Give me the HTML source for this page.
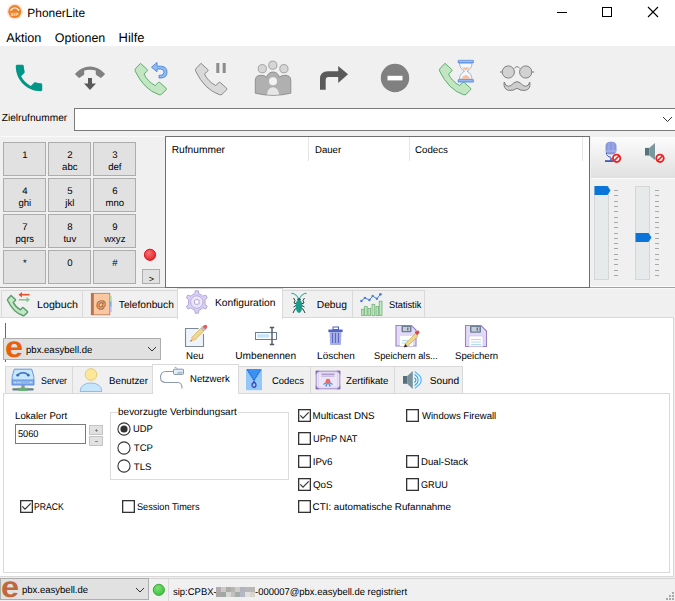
<!DOCTYPE html>
<html><head><meta charset="utf-8"><title>PhonerLite</title>
<style>
html,body{margin:0;padding:0;}
body{width:675px;height:601px;position:relative;overflow:hidden;background:#f0f0f0;font-family:'Liberation Sans', sans-serif;color:#000;}
svg{overflow:visible}
body{text-rendering:geometricPrecision}
</style></head><body>
<div style="position:absolute;left:0px;top:0px;width:675px;height:46px;background:#fff"></div>
<svg style="position:absolute;left:5px;top:2px" width="20" height="20" viewBox="0 0 20 20"><circle cx="9.8" cy="9.6" r="8.1" fill="#f6c49c" opacity="0.4"/><circle cx="9.8" cy="9.6" r="6.5" fill="#ee8228"/><path d="M5.4,8.6 Q9.8,3.6 14.2,8.6" fill="none" stroke="#fff" stroke-width="1.5" opacity="0.9"/><rect x="8" y="6.6" width="3.6" height="2.6" fill="#ee8228"/><text x="9.8" y="14.2" font-family="Liberation Sans" font-weight="bold" font-size="4.6" fill="#fde6d2" text-anchor="middle" letter-spacing="0.3">SIP</text></svg>
<div style="position:absolute;left:27.34px;top:8px;font-size:11.95px;line-height:11.95px;color:#000;white-space:nowrap;">PhonerLite</div>
<div style="position:absolute;left:557px;top:12px;width:10px;height:1px;background:#000"></div>
<div style="position:absolute;left:602px;top:7px;width:10px;height:10px;border:1px solid #000;box-sizing:border-box"></div>
<svg style="position:absolute;left:648px;top:7px" width="10" height="10" viewBox="0 0 10 10"><path d="M0,0 L10,10 M10,0 L0,10" stroke="#000" stroke-width="1.1"/></svg>
<div style="position:absolute;left:6.20px;top:32px;font-size:12.67px;line-height:12.67px;color:#000;white-space:nowrap;">Aktion</div>
<div style="position:absolute;left:54.80px;top:32px;font-size:12.44px;line-height:12.44px;color:#000;white-space:nowrap;">Optionen</div>
<div style="position:absolute;left:118.56px;top:32px;font-size:12.95px;line-height:12.95px;color:#000;white-space:nowrap;">Hilfe</div>
<div style="position:absolute;left:0px;top:46px;width:675px;height:90px;background:#f0f0f0"></div>
<svg style="position:absolute;left:14px;top:63px" width="30" height="30" viewBox="1.8 1.8 20.4 20.4"><path fill="#009688" d="M6.62 10.79c1.44 2.83 3.76 5.14 6.59 6.59l2.2-2.2c.27-.27.67-.36 1.02-.24 1.12.37 2.33.57 3.57.57.55 0 1 .45 1 1V20c0 .55-.45 1-1 1-9.39 0-17-7.61-17-17 0-.55.45-1 1-1h3.5c.55 0 1 .45 1 1 0 1.25.2 2.45.57 3.57.11.35.03.74-.25 1.02l-2.2 2.2z"/></svg>
<svg style="position:absolute;left:74px;top:64px" width="32" height="28" viewBox="0 0 32 28"><path fill="#808080" d="M1.2,10.5 Q1,9.8 1.6,9.2 Q8,2.6 16,2.6 Q24,2.6 30.4,9.2 Q31,9.8 30.8,10.5 L27.5,13.6 Q26.8,14.2 26,13.6 L22.3,11 Q21.8,10.6 21.8,9.9 L21.8,6.6 Q16,5 10.2,6.6 L10.2,9.9 Q10.2,10.6 9.7,11 L6,13.6 Q5.2,14.2 4.5,13.6 Z"/><path fill="#5a5a5a" d="M14,14 L18,14 L18,19.6 L22,19.6 L16,26 L10,19.6 L14,19.6 Z"/></svg>
<svg style="position:absolute;left:134px;top:61px" width="36" height="36" viewBox="0 0 36 36"><g transform="translate(0.5,2)"><path d="M6,0.3 L12.8,6.6 Q13.5,7.4 12.8,8.1 L9.5,11 Q13,18.5 20.8,22.6 L23.7,19.5 Q24.5,18.8 25.3,19.5 L31.6,25.2 Q32.3,26 31.6,26.8 L27,31.3 Q26,32.2 24.2,31.6 Q9.5,26.5 0.7,8.2 Q0.1,6.4 1.3,5.2 Z" fill="#c2e5c2" stroke="#5fae6e" stroke-width="1"/></g><path d="M23,1.5 L17.5,6.2 L23,10.8 L23,8 L26.5,8 Q30,8 30,11.2 Q30,14.3 26.5,14.3 L25,14.3 L25,17 L26.5,17 Q33,17 33,11.2 Q33,5.2 26.5,5.2 L23,5.2 Z" fill="#8cbcf2" stroke="#4a82d6" stroke-width="0.9"/></svg>
<svg style="position:absolute;left:194px;top:61px" width="36" height="36" viewBox="0 0 36 36"><g transform="translate(1,2)"><path d="M6,0.3 L12.8,6.6 Q13.5,7.4 12.8,8.1 L9.5,11 Q13,18.5 20.8,22.6 L23.7,19.5 Q24.5,18.8 25.3,19.5 L31.6,25.2 Q32.3,26 31.6,26.8 L27,31.3 Q26,32.2 24.2,31.6 Q9.5,26.5 0.7,8.2 Q0.1,6.4 1.3,5.2 Z" fill="#d9d9d9" stroke="#8a8a8a" stroke-width="1"/></g><rect x="22.3" y="2" width="3" height="10" fill="#8c8c8c"/><rect x="28.7" y="2" width="3" height="10" fill="#8c8c8c"/></svg>
<svg style="position:absolute;left:254px;top:59px" width="38" height="38" viewBox="0 0 38 38"><circle cx="8.3" cy="9.7" r="4.1" fill="#d6d6d6" stroke="#9a9a9a" stroke-width="0.9"/>
<circle cx="18.8" cy="6.2" r="4.1" fill="#d6d6d6" stroke="#9a9a9a" stroke-width="0.9"/>
<circle cx="29.9" cy="9.7" r="4.1" fill="#d6d6d6" stroke="#9a9a9a" stroke-width="0.9"/>
<path d="M1.3,34.2 L1.3,21.5 Q1.3,16.3 7,16.3 Q10.5,16.3 12.6,18 Q14.5,13 19,13 Q23.5,13 25.4,18 Q27.5,16.3 31,16.3 Q36.8,16.3 36.8,21.5 L36.8,34.2 Q19,38.5 1.3,34.2 Z" fill="#b0b0b0" stroke="#8a8a8a" stroke-width="0.9"/>
<circle cx="19" cy="22.3" r="4" fill="#f2f2f2"/>
<path d="M12.8,35.6 Q14,28.3 19,28.3 Q24,28.3 25.3,35.6 Q19,36.3 12.8,35.6 Z" fill="#e6e6e6"/></svg>
<svg style="position:absolute;left:318px;top:64px" width="32" height="28" viewBox="0 0 32 28"><path fill="#5a5a5a" d="M2,25.7 L2,15 Q2,7.3 10,7.3 L20.2,7.3 L20.2,2 L30,10.3 L20.2,19 L20.2,13 L10.5,13 Q7.7,13 7.7,16 L7.7,25.7 Z"/></svg>
<svg style="position:absolute;left:380px;top:63px" width="30" height="30" viewBox="0 0 30 30"><circle cx="15" cy="15" r="14.2" fill="#808080"/><rect x="7.5" y="12.8" width="15" height="4.6" fill="#fff"/></svg>
<svg style="position:absolute;left:438px;top:59px" width="38" height="38" viewBox="0 0 38 38"><g transform="translate(1,4)"><path d="M6,0.3 L12.8,6.6 Q13.5,7.4 12.8,8.1 L9.5,11 Q13,18.5 20.8,22.6 L23.7,19.5 Q24.5,18.8 25.3,19.5 L31.6,25.2 Q32.3,26 31.6,26.8 L27,31.3 Q26,32.2 24.2,31.6 Q9.5,26.5 0.7,8.2 Q0.1,6.4 1.3,5.2 Z" fill="#c2e5c2" stroke="#5fae6e" stroke-width="1"/></g><path d="M21.5,4 L34,4 Q34,9.5 29,12.2 Q34,15 34,20.4 L21.5,20.4 Q21.5,15 26.5,12.2 Q21.5,9.5 21.5,4 Z" fill="#f4f8fc" stroke="#8a9ab4" stroke-width="0.7"/><path d="M24,8.6 L31.5,8.6 Q30.2,10.6 27.75,11.3 Q25.3,10.6 24,8.6 Z" fill="#f8bc98"/><path d="M23.2,19.8 Q24.6,16.5 27.75,16 Q30.9,16.5 32.3,19.8 Z" fill="#f8bc98"/><rect x="20" y="1.2" width="15.6" height="2.8" rx="0.5" fill="#6e9ce8" stroke="#5a88d8" stroke-width="0.5"/><rect x="21" y="2.2" width="13.6" height="0.8" fill="#a8c8f4"/><rect x="20" y="20.4" width="15.6" height="2.8" rx="0.5" fill="#6e9ce8" stroke="#5a88d8" stroke-width="0.5"/><rect x="21" y="21.4" width="13.6" height="0.8" fill="#a8c8f4"/></svg>
<svg style="position:absolute;left:498px;top:62px" width="38" height="32" viewBox="0 0 38 32"><circle cx="10.3" cy="10" r="6.1" fill="#d2d2d2" stroke="#808080" stroke-width="1"/>
<circle cx="27.7" cy="10" r="6.1" fill="#d2d2d2" stroke="#808080" stroke-width="1"/>
<path d="M16.3,6.5 Q19,2.6 21.7,6.5" fill="none" stroke="#808080" stroke-width="1"/>
<path d="M1.8,10 L4.2,10 M33.8,10 L36.2,10" stroke="#808080" stroke-width="1"/>
<path d="M6.2,20 Q5,27 10.5,28.4 Q15.5,29 19,26.3 Q22.5,29 27.5,28.4 Q33,27 31.8,20 Q30.5,24.5 27.5,24.3 Q24.5,24 22.5,21 Q19,18.2 15.5,21 Q13.5,24 10.5,24.3 Q7.5,24.5 6.2,20 Z" fill="#cdcdcd" stroke="#808080" stroke-width="1"/></svg>
<div style="position:absolute;left:1.69px;top:114px;font-size:10.18px;line-height:10.18px;color:#000;white-space:nowrap;">Zielrufnummer</div>
<div style="position:absolute;left:74px;top:108px;width:610px;height:23px;background:#fff;border:1px solid #7a7a7a;box-sizing:border-box"></div>
<svg style="position:absolute;left:662px;top:116px" width="11" height="7" viewBox="0 0 11 7"><path d="M1,1 L5.5,5.5 L10,1" fill="none" stroke="#333" stroke-width="1"/></svg>
<div style="position:absolute;left:0px;top:136px;width:675px;height:1px;background:#fafafa"></div>
<div style="position:absolute;left:3px;top:142px;width:43px;height:34px;background:#e1e1e1;border:1px solid #adadad;box-sizing:border-box"></div>
<div style="position:absolute;left:-5.199999999999999px;top:151px;width:60px;text-align:center;font-size:9.6px;line-height:9.6px;color:#000;white-space:nowrap;">1</div>
<div style="position:absolute;left:48px;top:142px;width:43px;height:34px;background:#e1e1e1;border:1px solid #adadad;box-sizing:border-box"></div>
<div style="position:absolute;left:39.8px;top:151px;width:60px;text-align:center;font-size:9.6px;line-height:9.6px;color:#000;white-space:nowrap;">2</div>
<div style="position:absolute;left:39.8px;top:163px;width:60px;text-align:center;font-size:9.6px;line-height:9.6px;color:#000;white-space:nowrap;">abc</div>
<div style="position:absolute;left:93px;top:142px;width:43px;height:34px;background:#e1e1e1;border:1px solid #adadad;box-sizing:border-box"></div>
<div style="position:absolute;left:84.8px;top:151px;width:60px;text-align:center;font-size:9.6px;line-height:9.6px;color:#000;white-space:nowrap;">3</div>
<div style="position:absolute;left:84.8px;top:163px;width:60px;text-align:center;font-size:9.6px;line-height:9.6px;color:#000;white-space:nowrap;">def</div>
<div style="position:absolute;left:3px;top:178px;width:43px;height:34px;background:#e1e1e1;border:1px solid #adadad;box-sizing:border-box"></div>
<div style="position:absolute;left:-5.199999999999999px;top:187px;width:60px;text-align:center;font-size:9.6px;line-height:9.6px;color:#000;white-space:nowrap;">4</div>
<div style="position:absolute;left:-5.199999999999999px;top:199px;width:60px;text-align:center;font-size:9.6px;line-height:9.6px;color:#000;white-space:nowrap;">ghi</div>
<div style="position:absolute;left:48px;top:178px;width:43px;height:34px;background:#e1e1e1;border:1px solid #adadad;box-sizing:border-box"></div>
<div style="position:absolute;left:39.8px;top:187px;width:60px;text-align:center;font-size:9.6px;line-height:9.6px;color:#000;white-space:nowrap;">5</div>
<div style="position:absolute;left:39.8px;top:199px;width:60px;text-align:center;font-size:9.6px;line-height:9.6px;color:#000;white-space:nowrap;">jkl</div>
<div style="position:absolute;left:93px;top:178px;width:43px;height:34px;background:#e1e1e1;border:1px solid #adadad;box-sizing:border-box"></div>
<div style="position:absolute;left:84.8px;top:187px;width:60px;text-align:center;font-size:9.6px;line-height:9.6px;color:#000;white-space:nowrap;">6</div>
<div style="position:absolute;left:84.8px;top:199px;width:60px;text-align:center;font-size:9.6px;line-height:9.6px;color:#000;white-space:nowrap;">mno</div>
<div style="position:absolute;left:3px;top:214px;width:43px;height:34px;background:#e1e1e1;border:1px solid #adadad;box-sizing:border-box"></div>
<div style="position:absolute;left:-5.199999999999999px;top:223px;width:60px;text-align:center;font-size:9.6px;line-height:9.6px;color:#000;white-space:nowrap;">7</div>
<div style="position:absolute;left:-5.199999999999999px;top:235px;width:60px;text-align:center;font-size:9.6px;line-height:9.6px;color:#000;white-space:nowrap;">pqrs</div>
<div style="position:absolute;left:48px;top:214px;width:43px;height:34px;background:#e1e1e1;border:1px solid #adadad;box-sizing:border-box"></div>
<div style="position:absolute;left:39.8px;top:223px;width:60px;text-align:center;font-size:9.6px;line-height:9.6px;color:#000;white-space:nowrap;">8</div>
<div style="position:absolute;left:39.8px;top:235px;width:60px;text-align:center;font-size:9.6px;line-height:9.6px;color:#000;white-space:nowrap;">tuv</div>
<div style="position:absolute;left:93px;top:214px;width:43px;height:34px;background:#e1e1e1;border:1px solid #adadad;box-sizing:border-box"></div>
<div style="position:absolute;left:84.8px;top:223px;width:60px;text-align:center;font-size:9.6px;line-height:9.6px;color:#000;white-space:nowrap;">9</div>
<div style="position:absolute;left:84.8px;top:235px;width:60px;text-align:center;font-size:9.6px;line-height:9.6px;color:#000;white-space:nowrap;">wxyz</div>
<div style="position:absolute;left:3px;top:250px;width:43px;height:34px;background:#e1e1e1;border:1px solid #adadad;box-sizing:border-box"></div>
<div style="position:absolute;left:-5.199999999999999px;top:259px;width:60px;text-align:center;font-size:9.6px;line-height:9.6px;color:#000;white-space:nowrap;">*</div>
<div style="position:absolute;left:48px;top:250px;width:43px;height:34px;background:#e1e1e1;border:1px solid #adadad;box-sizing:border-box"></div>
<div style="position:absolute;left:39.8px;top:259px;width:60px;text-align:center;font-size:9.6px;line-height:9.6px;color:#000;white-space:nowrap;">0</div>
<div style="position:absolute;left:93px;top:250px;width:43px;height:34px;background:#e1e1e1;border:1px solid #adadad;box-sizing:border-box"></div>
<div style="position:absolute;left:84.8px;top:259px;width:60px;text-align:center;font-size:9.6px;line-height:9.6px;color:#000;white-space:nowrap;">#</div>
<svg style="position:absolute;left:143px;top:248px" width="14" height="14" viewBox="0 0 14 14"><defs><radialGradient id="rg" cx="0.4" cy="0.35" r="0.7"><stop offset="0" stop-color="#f87070"/><stop offset="1" stop-color="#e42424"/></radialGradient></defs><circle cx="7" cy="6.8" r="5.6" fill="url(#rg)" stroke="#dc0014" stroke-width="0.9"/></svg>
<div style="position:absolute;left:142px;top:269px;width:18px;height:15px;background:#e1e1e1;border:1px solid #adadad;box-sizing:border-box"></div>
<div style="position:absolute;left:121.30000000000001px;top:275px;width:60px;text-align:center;font-size:9px;line-height:9px;color:#000;white-space:nowrap;">&gt;</div>
<div style="position:absolute;left:165px;top:136px;width:425px;height:152px;background:#fff;border:1px solid #6f6f6f;box-sizing:border-box"></div>
<div style="position:absolute;left:308px;top:137px;width:1px;height:24px;background:#e5e5e5"></div>
<div style="position:absolute;left:409px;top:137px;width:1px;height:24px;background:#e5e5e5"></div>
<div style="position:absolute;left:582px;top:137px;width:1px;height:24px;background:#e5e5e5"></div>
<div style="position:absolute;left:171.68px;top:146px;font-size:10.21px;line-height:10.21px;color:#000;white-space:nowrap;">Rufnummer</div>
<div style="position:absolute;left:314.83px;top:146px;font-size:9.80px;line-height:9.80px;color:#000;white-space:nowrap;transform:scaleX(0.9775);transform-origin:0 0;">Dauer</div>
<div style="position:absolute;left:415.41px;top:146px;font-size:9.80px;line-height:9.80px;color:#000;white-space:nowrap;transform:scaleX(0.9925);transform-origin:0 0;">Codecs</div>
<div style="position:absolute;left:590px;top:136px;width:85px;height:151px;background:#f0f0f0"></div>
<div style="position:absolute;left:591px;top:137px;width:84px;height:41px;background:linear-gradient(#fcfcfc,#e0e0e0)"></div>
<div style="position:absolute;left:591px;top:178px;width:84px;height:1px;background:#fafafa"></div>
<svg style="position:absolute;left:602px;top:140px" width="22" height="26" viewBox="0 0 22 26"><rect x="3.5" y="1.8" width="11" height="12.8" rx="4.2" fill="#8a98dc"/><rect x="3.5" y="10.5" width="11" height="1" fill="#b4bef0"/>
<path d="M7,2.5 L7,10.5 M11,2.5 L11,10.5" stroke="#a8b4ec" stroke-width="0.9"/>
<path d="M4.2,12.5 Q4.5,16.8 9,17.2" fill="none" stroke="#3a58b8" stroke-width="1"/>
<path d="M9,17.8 L9,20.5" stroke="#3a58b8" stroke-width="1.4"/>
<rect x="3" y="20.3" width="8" height="1.6" fill="#2a48b0"/>
<circle cx="14.6" cy="18.3" r="4.6" fill="#e82424"/><circle cx="14.6" cy="18.3" r="2.7" fill="#fff"/><path d="M12.3,20.6 L16.9,16" stroke="#e82424" stroke-width="1.6"/></svg>
<svg style="position:absolute;left:642px;top:140px" width="24" height="26" viewBox="0 0 24 26"><rect x="3" y="7.9" width="4.2" height="7.6" fill="#56747c"/>
<path d="M7.2,7.9 L13,3 L13,20 L7.2,15.5 Z" fill="#7a969e"/>
<circle cx="18" cy="18.3" r="4.6" fill="#e82424"/><circle cx="18" cy="18.3" r="2.7" fill="#fff"/><path d="M15.7,20.6 L20.3,16" stroke="#e82424" stroke-width="1.6"/></svg>
<div style="position:absolute;left:594px;top:186px;width:15px;height:94px;background:#e7eaea;border:1px solid #d6d6d6;box-sizing:border-box"></div>
<div style="position:absolute;left:635px;top:186px;width:15px;height:94px;background:#e7eaea;border:1px solid #d6d6d6;box-sizing:border-box"></div>
<svg style="position:absolute;left:594px;top:186px" width="17" height="9" viewBox="0 0 17 9"><path d="M0.5,0 L13.5,0 L16.5,4.5 L13.5,9 L0.5,9 Z" fill="#0a74d8"/></svg>
<svg style="position:absolute;left:635px;top:233px" width="17" height="9" viewBox="0 0 17 9"><path d="M0.5,0 L13.5,0 L16.5,4.5 L13.5,9 L0.5,9 Z" fill="#0a74d8"/></svg>
<div style="position:absolute;left:614px;top:190px;width:4px;height:1px;background:#a8a8a8"></div>
<div style="position:absolute;left:655px;top:190px;width:4px;height:1px;background:#a8a8a8"></div>
<div style="position:absolute;left:614px;top:195px;width:4px;height:1px;background:#a8a8a8"></div>
<div style="position:absolute;left:655px;top:195px;width:4px;height:1px;background:#a8a8a8"></div>
<div style="position:absolute;left:614px;top:201px;width:4px;height:1px;background:#a8a8a8"></div>
<div style="position:absolute;left:655px;top:201px;width:4px;height:1px;background:#a8a8a8"></div>
<div style="position:absolute;left:614px;top:206px;width:4px;height:1px;background:#a8a8a8"></div>
<div style="position:absolute;left:655px;top:206px;width:4px;height:1px;background:#a8a8a8"></div>
<div style="position:absolute;left:614px;top:211px;width:4px;height:1px;background:#a8a8a8"></div>
<div style="position:absolute;left:655px;top:211px;width:4px;height:1px;background:#a8a8a8"></div>
<div style="position:absolute;left:614px;top:217px;width:4px;height:1px;background:#a8a8a8"></div>
<div style="position:absolute;left:655px;top:217px;width:4px;height:1px;background:#a8a8a8"></div>
<div style="position:absolute;left:614px;top:222px;width:4px;height:1px;background:#a8a8a8"></div>
<div style="position:absolute;left:655px;top:222px;width:4px;height:1px;background:#a8a8a8"></div>
<div style="position:absolute;left:614px;top:227px;width:4px;height:1px;background:#a8a8a8"></div>
<div style="position:absolute;left:655px;top:227px;width:4px;height:1px;background:#a8a8a8"></div>
<div style="position:absolute;left:614px;top:233px;width:4px;height:1px;background:#a8a8a8"></div>
<div style="position:absolute;left:655px;top:233px;width:4px;height:1px;background:#a8a8a8"></div>
<div style="position:absolute;left:614px;top:238px;width:4px;height:1px;background:#a8a8a8"></div>
<div style="position:absolute;left:655px;top:238px;width:4px;height:1px;background:#a8a8a8"></div>
<div style="position:absolute;left:614px;top:243px;width:4px;height:1px;background:#a8a8a8"></div>
<div style="position:absolute;left:655px;top:243px;width:4px;height:1px;background:#a8a8a8"></div>
<div style="position:absolute;left:614px;top:248px;width:4px;height:1px;background:#a8a8a8"></div>
<div style="position:absolute;left:655px;top:248px;width:4px;height:1px;background:#a8a8a8"></div>
<div style="position:absolute;left:614px;top:254px;width:4px;height:1px;background:#a8a8a8"></div>
<div style="position:absolute;left:655px;top:254px;width:4px;height:1px;background:#a8a8a8"></div>
<div style="position:absolute;left:614px;top:259px;width:4px;height:1px;background:#a8a8a8"></div>
<div style="position:absolute;left:655px;top:259px;width:4px;height:1px;background:#a8a8a8"></div>
<div style="position:absolute;left:614px;top:264px;width:4px;height:1px;background:#a8a8a8"></div>
<div style="position:absolute;left:655px;top:264px;width:4px;height:1px;background:#a8a8a8"></div>
<div style="position:absolute;left:614px;top:270px;width:4px;height:1px;background:#a8a8a8"></div>
<div style="position:absolute;left:655px;top:270px;width:4px;height:1px;background:#a8a8a8"></div>
<div style="position:absolute;left:614px;top:275px;width:4px;height:1px;background:#a8a8a8"></div>
<div style="position:absolute;left:655px;top:275px;width:4px;height:1px;background:#a8a8a8"></div>
<div style="position:absolute;left:590px;top:286px;width:85px;height:1px;background:#fcfcfc"></div>
<div style="position:absolute;left:0px;top:287px;width:675px;height:1px;background:#a0a0a0"></div>
<div style="position:absolute;left:165px;top:287px;width:425px;height:1px;background:#6f6f6f"></div>
<div style="position:absolute;left:0px;top:288px;width:675px;height:30px;background:#f0f0f0"></div>
<div style="position:absolute;left:0px;top:288px;width:675px;height:1px;background:#f7f7f7"></div>
<div style="position:absolute;left:0px;top:317px;width:674px;height:260px;background:#fff;border:1px solid #d9d9d9;border-left:none;box-sizing:border-box"></div>
<div style="position:absolute;left:1px;top:290px;width:82px;height:27px;background:#f0f0f0;border:1px solid #d9d9d9;border-bottom:none;box-sizing:border-box"></div>
<div style="position:absolute;left:82px;top:290px;width:96px;height:27px;background:#f0f0f0;border:1px solid #d9d9d9;border-bottom:none;box-sizing:border-box"></div>
<div style="position:absolute;left:282px;top:290px;width:71px;height:27px;background:#f0f0f0;border:1px solid #d9d9d9;border-bottom:none;box-sizing:border-box"></div>
<div style="position:absolute;left:352px;top:290px;width:73px;height:27px;background:#f0f0f0;border:1px solid #d9d9d9;border-bottom:none;box-sizing:border-box"></div>
<div style="position:absolute;left:177px;top:288px;width:106px;height:31px;background:#fff;border:1px solid #d9d9d9;border-bottom:none;box-sizing:border-box"></div>
<div style="position:absolute;left:36.54px;top:301px;font-size:10.30px;line-height:10.30px;color:#000;white-space:nowrap;transform:scaleX(1.0389);transform-origin:0 0;">Logbuch</div>
<div style="position:absolute;left:118.80px;top:301px;font-size:10.21px;line-height:10.21px;color:#000;white-space:nowrap;">Telefonbuch</div>
<div style="position:absolute;left:214.88px;top:299px;font-size:10.27px;line-height:10.27px;color:#000;white-space:nowrap;">Konfiguration</div>
<div style="position:absolute;left:316.78px;top:301px;font-size:10.25px;line-height:10.25px;color:#000;white-space:nowrap;">Debug</div>
<div style="position:absolute;left:388.73px;top:301px;font-size:9.80px;line-height:9.80px;color:#000;white-space:nowrap;transform:scaleX(0.9437);transform-origin:0 0;">Statistik</div>
<svg style="position:absolute;left:6px;top:292px" width="26" height="26" viewBox="0 0 26 26"><g transform="translate(1.2,3.3) scale(0.64)"><path d="M6,0.3 L12.8,6.6 Q13.5,7.4 12.8,8.1 L9.5,11 Q13,18.5 20.8,22.6 L23.7,19.5 Q24.5,18.8 25.3,19.5 L31.6,25.2 Q32.3,26 31.6,26.8 L27,31.3 Q26,32.2 24.2,31.6 Q9.5,26.5 0.7,8.2 Q0.1,6.4 1.3,5.2 Z" fill="#c2e8c2" stroke="#5a9c6c" stroke-width="2.2"/></g><path d="M14.5,2.7 L23.5,2.7" stroke="#e8502e" stroke-width="1.6"/><path d="M12.5,2.7 L16,0 L16,5.4 Z" fill="#e8502e"/><path d="M12.8,7.8 L22,7.8" stroke="#86c496" stroke-width="1.6"/><path d="M24,7.8 L20.5,5.1 L20.5,10.5 Z" fill="#86c496"/></svg>
<svg style="position:absolute;left:90px;top:292px" width="24" height="24" viewBox="0 0 24 24"><rect x="1.3" y="1.3" width="18.5" height="21.5" fill="#fac8a0" stroke="#b8734e" stroke-width="0.8"/>
<rect x="1" y="1" width="2.8" height="22" fill="#b8734e"/>
<rect x="19.9" y="3.8" width="1.8" height="5.4" fill="#a8dca8"/><rect x="19.9" y="9.2" width="1.8" height="5.6" fill="#80b0f0"/><rect x="19.9" y="14.8" width="1.8" height="5.4" fill="#c8b8f0"/>
<text x="11.2" y="16.2" font-family="Liberation Sans" font-size="10.5" fill="#a0603c" stroke="#a0603c" stroke-width="0.25" text-anchor="middle">@</text></svg>
<svg style="position:absolute;left:185px;top:289px" width="24" height="26" viewBox="0 0 24 26"><path d="M7.80,5.73 L9.97,4.85 L10.43,1.81 L13.57,1.81 L14.03,4.85 L16.20,5.73 L18.04,7.16 L20.90,6.04 L22.48,8.77 L20.07,10.68 L20.40,13.00 L20.07,15.32 L22.48,17.23 L20.90,19.96 L18.04,18.84 L16.20,20.27 L14.03,21.15 L13.57,24.19 L10.43,24.19 L9.97,21.15 L7.80,20.27 L5.96,18.84 L3.10,19.96 L1.52,17.23 L3.93,15.32 L3.60,13.00 L3.93,10.68 L1.52,8.77 L3.10,6.04 L5.96,7.16 Z" transform="translate(-0.2,0)" fill="#d9d1f1" stroke="#ae9fd8" stroke-width="0.9" stroke-linejoin="round"/>
<circle cx="11.8" cy="13" r="6.2" fill="#ebe7f8" stroke="#ae9fd8" stroke-width="0.8"/>
<rect x="9.6" y="10.8" width="4.4" height="4.4" rx="0.6" fill="#fff" stroke="#a898d4" stroke-width="0.9"/></svg>
<svg style="position:absolute;left:289px;top:292px" width="20" height="23" viewBox="0 0 20 23"><path d="M2.5,2 Q3,1 4.5,1.5 Q8,3 10,7 M17.5,2 Q17,1 15.5,1.5 Q12,3 10,7" fill="none" stroke="#4ab0a0" stroke-width="1.1"/>
<path d="M4.5,6 L6,8.5 L5,11 L8,12 M15.5,6 L14,8.5 L15,11 L12,12 M4.5,15 L7,13.5 M15.5,15 L13,13.5 M4,21 L6,17 L8,16.5 M16,21 L14,17 L12,16.5" fill="none" stroke="#2e3c3c" stroke-width="1"/>
<ellipse cx="10" cy="7.5" rx="1.8" ry="1.6" fill="#0e6e60"/>
<path d="M10,8 Q13.3,8.5 13.3,13 Q13.3,20 10,21 Q6.7,20 6.7,13 Q6.7,8.5 10,8 Z" fill="#1a9c8a"/></svg>
<svg style="position:absolute;left:359px;top:292px" width="25" height="25" viewBox="0 0 25 25"><path d="M2.4,9 L5.9,5.9 L10.4,8 L13.7,4 L17.9,6.7 L21.4,2.3" fill="none" stroke="#4a80d2" stroke-width="1"/>
<g fill="#4a80d2"><circle cx="2.4" cy="9" r="1.3"/><circle cx="5.9" cy="5.9" r="1.2"/><circle cx="10.4" cy="8" r="1.2"/><circle cx="13.7" cy="4" r="1.2"/><circle cx="17.9" cy="6.7" r="1.2"/><circle cx="21.4" cy="2.3" r="1.4"/></g>
<g fill="#bfe4bf" stroke="#74b27a" stroke-width="0.8"><rect x="2.4" y="17.2" width="2.6" height="6.2"/><rect x="5.6" y="14.5" width="2.6" height="8.9"/><rect x="9" y="16.5" width="2.6" height="6.9"/><rect x="13" y="12.3" width="2.8" height="11.1"/><rect x="17" y="14.5" width="2.6" height="8.9"/><rect x="20.2" y="9.2" width="2.8" height="14.2"/></g></svg>
<div style="position:absolute;left:5px;top:323px;width:1px;height:39px;background:#6a6a6a"></div>
<div style="position:absolute;left:3px;top:338px;width:158px;height:22px;background:#e1e1e1;border:1px solid #adadad;box-sizing:border-box"></div>
<svg style="position:absolute;left:3px;top:336px" width="24" height="24" viewBox="0 0 24 24"><text transform="translate(11,21) scale(1.1,1)" font-family="Liberation Sans" font-weight="bold" font-size="29.5" fill="#e8600a" text-anchor="middle">e</text></svg>
<div style="position:absolute;left:25.83px;top:346px;font-size:9.80px;line-height:9.80px;color:#000;white-space:nowrap;transform:scaleX(0.9753);transform-origin:0 0;">pbx.easybell.de</div>
<svg style="position:absolute;left:147px;top:346px" width="10" height="7" viewBox="0 0 10 7"><path d="M1,1 L5,5 L9,1" fill="none" stroke="#333" stroke-width="1"/></svg>
<div style="position:absolute;left:186.03px;top:352px;font-size:9.80px;line-height:9.80px;color:#000;white-space:nowrap;transform:scaleX(0.9852);transform-origin:0 0;">Neu</div>
<div style="position:absolute;left:235.29px;top:352px;font-size:10.14px;line-height:10.14px;color:#000;white-space:nowrap;">Umbenennen</div>
<div style="position:absolute;left:317.10px;top:352px;font-size:9.96px;line-height:9.96px;color:#000;white-space:nowrap;">Löschen</div>
<div style="position:absolute;left:373.83px;top:352px;font-size:9.80px;line-height:9.80px;color:#000;white-space:nowrap;transform:scaleX(0.9443);transform-origin:0 0;">Speichern als...</div>
<div style="position:absolute;left:454.62px;top:352px;font-size:9.80px;line-height:9.80px;color:#000;white-space:nowrap;transform:scaleX(0.9795);transform-origin:0 0;">Speichern</div>
<svg style="position:absolute;left:183px;top:323px" width="26" height="26" viewBox="0 0 26 26"><path d="M15.5,5.5 L2.5,5.5 L2.5,23.5 L20.5,23.5 L20.5,11" fill="#eef4fa" stroke="#7a8898" stroke-width="1.1"/>
<path d="M11.64,17.18 L8.82,14.36 L18.0,5.17 L20.83,7.99 Z" fill="#f2d88e" stroke="#c9a24a" stroke-width="0.6"/>
<path d="M7.4,18.6 L8.82,14.36 L11.64,17.18 Z" fill="#f6c47e"/>
<path d="M7.4,18.6 L7.9,17.1 L8.9,18.1 Z" fill="#222"/>
<path d="M18.0,5.17 L20.83,7.99 L22.4,6.4 L19.6,3.6 Z" fill="#b4c4d4" stroke="#8a9aaa" stroke-width="0.5"/>
<path d="M19.6,3.6 L22.4,6.4 L23.6,5.2 Q25,3.6 23.8,2.2 Q22.4,1 20.8,2.4 Z" fill="#ee5a5a"/></svg>
<svg style="position:absolute;left:254px;top:326px" width="24" height="20" viewBox="0 0 24 20"><rect x="1.5" y="6.5" width="21" height="7" fill="#fff" stroke="#6a7e92" stroke-width="1"/>
<rect x="3.2" y="8.2" width="11.8" height="3.4" fill="#c2e4fc"/>
<path d="M18,1.5 L18,18.5 M15.8,1.5 L20.2,1.5 M15.8,18.5 L20.2,18.5" stroke="#4e5866" stroke-width="1.4"/></svg>
<svg style="position:absolute;left:327px;top:325px" width="17" height="21" viewBox="0 0 17 21"><rect x="6" y="2" width="5.5" height="2.5" fill="none" stroke="#5060c0" stroke-width="1"/>
<path d="M1.5,4.5 L15.5,4.5 L15.8,7 L1.2,7 Z" fill="#5464c4"/>
<path d="M2.5,7 L14.5,7 L14,19 Q14,20 13,20 L4,20 Q3,20 3,19 Z" fill="#a8b0e2"/>
<path d="M5.5,8 L5.5,18 M8.5,8 L8.5,18 M11.5,8 L11.5,18" stroke="#5a68c6" stroke-width="1.1"/></svg>
<svg style="position:absolute;left:394px;top:324px" width="26" height="24" viewBox="0 0 26 24"><path d="M2,1.5 L17.5,1.5 L22,6 L22,22 L2,22 Z" fill="#e2daf6" stroke="#9a80c4" stroke-width="1.1"/>
<rect x="7.5" y="1.8" width="10" height="6.5" rx="1" fill="#6a7e94"/><rect x="9" y="3" width="7" height="4" fill="#c8ccd8"/><rect x="13" y="3.5" width="1.5" height="3" fill="#6a7e94"/>
<rect x="6" y="12" width="13" height="10" fill="#fff"/>
<path d="M8,16.5 L14,16.5 M8,19 L15,19" stroke="#a8d8f0" stroke-width="0.9"/>
<path d="M11,20 L21.5,9.5 L24,12 L13.5,22.5 Z" fill="#f0d68c" stroke="#c8a048" stroke-width="0.6"/>
<path d="M20.8,8.8 L23,6.6 Q24,6 25,7 Q26,8 25.2,9 L23.3,11.2 Z" fill="#e24848"/>
<path d="M11,20 L13.5,22.5 L10,23.5 Z" fill="#222"/></svg>
<svg style="position:absolute;left:463px;top:323px" width="26" height="26" viewBox="0 0 26 26"><path d="M2.5,2.5 L18,2.5 L23.5,8 L23.5,23.5 L2.5,23.5 Z" fill="#e2daf6" stroke="#9a80c4" stroke-width="1.1"/>
<rect x="7" y="2.8" width="11" height="7" rx="1" fill="#6a7e94"/><rect x="8.5" y="4" width="8" height="4.5" fill="#c8ccd8"/><rect x="13.5" y="4.5" width="1.6" height="3.2" fill="#6a7e94"/>
<rect x="6" y="13" width="14" height="10.5" fill="#fff" stroke="#c8bce8" stroke-width="0.6"/>
<path d="M8,16.5 L18,16.5 M8,19 L18,19 M8,21.5 L18,21.5" stroke="#a8d8f0" stroke-width="0.9"/></svg>
<div style="position:absolute;left:3px;top:393px;width:667px;height:180px;background:#fff;border:1px solid #d9d9d9;box-sizing:border-box"></div>
<div style="position:absolute;left:5px;top:366px;width:68px;height:27px;background:#f0f0f0;border:1px solid #d9d9d9;border-bottom:none;box-sizing:border-box"></div>
<div style="position:absolute;left:72px;top:366px;width:81px;height:27px;background:#f0f0f0;border:1px solid #d9d9d9;border-bottom:none;box-sizing:border-box"></div>
<div style="position:absolute;left:238px;top:366px;width:73px;height:27px;background:#f0f0f0;border:1px solid #d9d9d9;border-bottom:none;box-sizing:border-box"></div>
<div style="position:absolute;left:310px;top:366px;width:85px;height:27px;background:#f0f0f0;border:1px solid #d9d9d9;border-bottom:none;box-sizing:border-box"></div>
<div style="position:absolute;left:394px;top:366px;width:69px;height:27px;background:#f0f0f0;border:1px solid #d9d9d9;border-bottom:none;box-sizing:border-box"></div>
<div style="position:absolute;left:152px;top:364px;width:87px;height:30px;background:#fff;border:1px solid #d9d9d9;border-bottom:none;box-sizing:border-box"></div>
<div style="position:absolute;left:41.05px;top:377px;font-size:9.80px;line-height:9.80px;color:#000;white-space:nowrap;transform:scaleX(0.9032);transform-origin:0 0;">Server</div>
<div style="position:absolute;left:109.02px;top:377px;font-size:9.80px;line-height:9.80px;color:#000;white-space:nowrap;transform:scaleX(0.9918);transform-origin:0 0;">Benutzer</div>
<div style="position:absolute;left:189.84px;top:375px;font-size:9.80px;line-height:9.80px;color:#000;white-space:nowrap;transform:scaleX(0.9737);transform-origin:0 0;">Netzwerk</div>
<div style="position:absolute;left:271.93px;top:377px;font-size:9.80px;line-height:9.80px;color:#000;white-space:nowrap;transform:scaleX(0.9617);transform-origin:0 0;">Codecs</div>
<div style="position:absolute;left:346.11px;top:377px;font-size:9.80px;line-height:9.80px;color:#000;white-space:nowrap;transform:scaleX(0.9864);transform-origin:0 0;">Zertifikate</div>
<div style="position:absolute;left:429.69px;top:377px;font-size:10.20px;line-height:10.20px;color:#000;white-space:nowrap;">Sound</div>
<svg style="position:absolute;left:11px;top:368px" width="24" height="24" viewBox="0 0 24 24"><path d="M3.3,1.2 L20.7,1.2 L22.8,8.3 L22.8,16.8 L1.2,16.8 L1.2,8.3 Z" fill="#c6e6fc" stroke="#5c8ce0" stroke-width="0.9"/>
<rect x="1.2" y="12" width="21.6" height="4.8" fill="#8ab6ec" stroke="#5c8ce0" stroke-width="0.9"/>
<path d="M6.5,7 Q12,2.5 17.5,7" fill="none" stroke="#3a6ac0" stroke-width="1.4"/><circle cx="6.7" cy="7.2" r="1.4" fill="#3a6ac0"/><circle cx="17.3" cy="7.2" r="1.4" fill="#3a6ac0"/>
<path d="M3.5,14.4 L5,14.4 M6.5,14.4 L7.5,14.4 M8.5,14.4 L9.5,14.4 M19,14.4 L20.5,14.4" stroke="#e8f2fc" stroke-width="1"/>
<rect x="10.3" y="17" width="3.4" height="3" fill="#8898a8"/>
<rect x="1.3" y="20.3" width="21.4" height="2.2" rx="1" fill="#6a7a8c"/>
<rect x="7.2" y="19.8" width="9.6" height="3" fill="#64b070"/></svg>
<svg style="position:absolute;left:79px;top:367px" width="25" height="26" viewBox="0 0 25 26"><circle cx="12" cy="7.5" r="5.8" fill="#fde89a" stroke="#e0c060" stroke-width="0.8"/>
<path d="M1.2,24.5 Q1.2,20 4.5,18 Q7,16 12,16 Q17,16 19.5,18 Q22.8,20 22.8,24.5 Z" fill="#c6e6fc" stroke="#86acd8" stroke-width="0.8"/></svg>
<svg style="position:absolute;left:158px;top:366px" width="28" height="24" viewBox="0 0 28 24"><path d="M15,5.5 L8,5.5 Q2.5,5.5 2.5,11.5 Q2.5,16.5 8,16.5 L20,16.5 Q24,16.5 24,22.5" fill="none" stroke="#8c9cac" stroke-width="1.1"/>
<rect x="15.5" y="3.2" width="10" height="5.2" rx="0.8" fill="#e4eef8" stroke="#7a8ca0" stroke-width="0.9"/>
<rect x="19.5" y="5.8" width="5" height="1.8" fill="#a8bcd0"/>
<path d="M16.5,1 L19.5,2.5" stroke="#8c9cac" stroke-width="0.8"/></svg>
<svg style="position:absolute;left:245px;top:368px" width="18" height="23" viewBox="0 0 18 23"><rect x="1" y="1" width="16" height="21.2" fill="#92c8f8"/>
<path d="M1.5,1 L16.5,1 L9,13 Z" fill="#3c92f0"/>
<path d="M2.5,2 L9,12.5 L15.5,2" fill="none" stroke="#1e62d0" stroke-width="1.3" stroke-dasharray="1.2,0.9"/>
<path d="M9,13 L9,15" stroke="#3a40b0" stroke-width="1.5"/>
<ellipse cx="9" cy="17" rx="2" ry="2.4" fill="none" stroke="#3a40b0" stroke-width="1.2"/></svg>
<svg style="position:absolute;left:315px;top:370px" width="26" height="20" viewBox="0 0 26 20"><rect x="1.2" y="1.2" width="23.6" height="17.6" fill="#ece6f8" stroke="#a08ac8" stroke-width="1"/>
<rect x="3.2" y="3" width="19.6" height="14" fill="none" stroke="#d4c8ea" stroke-width="0.7"/>
<path d="M0.7,0.7 L4.5,0.7 L0.7,4.5 Z M25.3,0.7 L21.5,0.7 L25.3,4.5 Z M0.7,19.3 L4.5,19.3 L0.7,15.5 Z M25.3,19.3 L21.5,19.3 L25.3,15.5 Z" fill="#8a70b4"/>
<path d="M6.5,4.2 L19.5,4.2" stroke="#8a70b4" stroke-width="0.9"/><path d="M6.5,6.1 L19.5,6.1" stroke="#a48cc8" stroke-width="0.7"/>
<path d="M12.2,11.5 L10,16.5 L11,16 L11.5,17 L13.2,12.5 Z M13.8,11.5 L16,16.5 L15,16 L14.5,17 L12.8,12.5 Z" fill="#4a90d8"/>
<path d="M12,12 L8.5,14.5 M14,12 L17.5,14.5" stroke="#4a90d8" stroke-width="1.3"/>
<circle cx="13" cy="11.2" r="2.4" fill="#ee6a6a"/></svg>
<svg style="position:absolute;left:401px;top:369px" width="24" height="22" viewBox="0 0 24 22"><rect x="2" y="7" width="4.2" height="7.8" fill="#586e7c"/>
<path d="M6.2,7 L11.8,2 L11.8,20 L6.2,14.8 Z" fill="#7a929c"/>
<path d="M13.4,8.6 Q16.4,11 13.4,13.6" fill="none" stroke="#1a9cf0" stroke-width="1.1"/>
<path d="M13.6,5.4 L16.4,8 Q17.9,11 16.4,14 L13.6,16.6" fill="none" stroke="#2aa6f2" stroke-width="1.1"/>
<path d="M13.8,2.6 L18.8,6.8 Q21.6,11 18.8,15.2 L13.8,19.4" fill="none" stroke="#44b4f8" stroke-width="1.1"/></svg>
<div style="position:absolute;left:14.83px;top:412px;font-size:9.80px;line-height:9.80px;color:#000;white-space:nowrap;transform:scaleX(0.9870);transform-origin:0 0;">Lokaler Port</div>
<div style="position:absolute;left:15px;top:424px;width:71px;height:20px;background:#fff;border:1px solid #7a7a7a;box-sizing:border-box"></div>
<div style="position:absolute;left:17.73px;top:430px;font-size:9.80px;line-height:9.80px;color:#000;white-space:nowrap;transform:scaleX(0.9404);transform-origin:0 0;">5060</div>
<div style="position:absolute;left:89px;top:425px;width:14px;height:10px;background:#e1e1e1;border:1px solid #c4c4c4;box-sizing:border-box"></div>
<div style="position:absolute;left:89px;top:436px;width:14px;height:10px;background:#e1e1e1;border:1px solid #c4c4c4;box-sizing:border-box"></div>
<div style="position:absolute;left:95px;top:430px;width:3px;height:1px;background:#8a8a8a"></div>
<div style="position:absolute;left:96px;top:429px;width:1px;height:3px;background:#8a8a8a"></div>
<div style="position:absolute;left:95px;top:441px;width:3px;height:1px;background:#8a8a8a"></div>
<div style="position:absolute;left:110px;top:412px;width:179px;height:68px;border:1px solid #dcdcdc;box-sizing:border-box"></div>
<div style="position:absolute;left:117.5px;top:405px;width:120px;height:12px;background:#fff"></div>
<div style="position:absolute;left:118.10px;top:408px;font-size:9.94px;line-height:9.94px;color:#000;white-space:nowrap;">bevorzugte Verbindungsart</div>
<svg style="position:absolute;left:117.4px;top:421.5px" width="14" height="14" viewBox="0 0 14 14"><circle cx="7" cy="7" r="6.1" fill="#fff" stroke="#333" stroke-width="1.1"/><circle cx="7" cy="7" r="3.6" fill="#333"/></svg>
<svg style="position:absolute;left:117.4px;top:440.5px" width="14" height="14" viewBox="0 0 14 14"><circle cx="7" cy="7" r="6.1" fill="#fff" stroke="#333" stroke-width="1.1"/></svg>
<svg style="position:absolute;left:117.4px;top:459.3px" width="14" height="14" viewBox="0 0 14 14"><circle cx="7" cy="7" r="6.1" fill="#fff" stroke="#333" stroke-width="1.1"/></svg>
<div style="position:absolute;left:133.14px;top:425px;font-size:9.80px;line-height:9.80px;color:#000;white-space:nowrap;transform:scaleX(0.9568);transform-origin:0 0;">UDP</div>
<div style="position:absolute;left:133.8px;top:444px;font-size:9.6px;line-height:9.6px;color:#000;white-space:nowrap;">TCP</div>
<div style="position:absolute;left:133.8px;top:463px;font-size:9.6px;line-height:9.6px;color:#000;white-space:nowrap;">TLS</div>
<svg style="position:absolute;left:298px;top:409px" width="13" height="13" viewBox="0 0 13 13"><rect x="0.65" y="0.65" width="11.7" height="11.7" fill="#fff" stroke="#333" stroke-width="1.3"/><path d="M2.3,6.4 L5,9.2 L10.7,3.4" fill="none" stroke="#333" stroke-width="1.2"/></svg>
<div style="position:absolute;left:312.52px;top:412px;font-size:9.80px;line-height:9.80px;color:#000;white-space:nowrap;">Multicast DNS</div>
<svg style="position:absolute;left:406px;top:409px" width="13" height="13" viewBox="0 0 13 13"><rect x="0.65" y="0.65" width="11.7" height="11.7" fill="#fff" stroke="#333" stroke-width="1.3"/></svg>
<div style="position:absolute;left:421.50px;top:412px;font-size:9.80px;line-height:9.80px;color:#000;white-space:nowrap;transform:scaleX(0.9732);transform-origin:0 0;">Windows Firewall</div>
<svg style="position:absolute;left:298px;top:432px" width="13" height="13" viewBox="0 0 13 13"><rect x="0.65" y="0.65" width="11.7" height="11.7" fill="#fff" stroke="#333" stroke-width="1.3"/></svg>
<div style="position:absolute;left:313.05px;top:435px;font-size:9.80px;line-height:9.80px;color:#000;white-space:nowrap;transform:scaleX(0.9437);transform-origin:0 0;">UPnP NAT</div>
<svg style="position:absolute;left:298px;top:455px" width="13" height="13" viewBox="0 0 13 13"><rect x="0.65" y="0.65" width="11.7" height="11.7" fill="#fff" stroke="#333" stroke-width="1.3"/></svg>
<div style="position:absolute;left:312.82px;top:458px;font-size:9.80px;line-height:9.80px;color:#000;white-space:nowrap;">IPv6</div>
<svg style="position:absolute;left:406px;top:455px" width="13" height="13" viewBox="0 0 13 13"><rect x="0.65" y="0.65" width="11.7" height="11.7" fill="#fff" stroke="#333" stroke-width="1.3"/></svg>
<div style="position:absolute;left:420.73px;top:458px;font-size:9.80px;line-height:9.80px;color:#000;white-space:nowrap;transform:scaleX(0.9822);transform-origin:0 0;">Dual-Stack</div>
<svg style="position:absolute;left:298px;top:478px" width="13" height="13" viewBox="0 0 13 13"><rect x="0.65" y="0.65" width="11.7" height="11.7" fill="#fff" stroke="#333" stroke-width="1.3"/><path d="M2.3,6.4 L5,9.2 L10.7,3.4" fill="none" stroke="#333" stroke-width="1.2"/></svg>
<div style="position:absolute;left:313.01px;top:481px;font-size:9.80px;line-height:9.80px;color:#000;white-space:nowrap;">QoS</div>
<svg style="position:absolute;left:406px;top:478px" width="13" height="13" viewBox="0 0 13 13"><rect x="0.65" y="0.65" width="11.7" height="11.7" fill="#fff" stroke="#333" stroke-width="1.3"/></svg>
<div style="position:absolute;left:421.04px;top:481px;font-size:9.80px;line-height:9.80px;color:#000;white-space:nowrap;transform:scaleX(0.9292);transform-origin:0 0;">GRUU</div>
<svg style="position:absolute;left:298px;top:500px" width="13" height="13" viewBox="0 0 13 13"><rect x="0.65" y="0.65" width="11.7" height="11.7" fill="#fff" stroke="#333" stroke-width="1.3"/></svg>
<div style="position:absolute;left:312.61px;top:503px;font-size:9.80px;line-height:9.80px;color:#000;white-space:nowrap;">CTI: automatische Rufannahme</div>
<svg style="position:absolute;left:19.5px;top:500px" width="13" height="13" viewBox="0 0 13 13"><rect x="0.65" y="0.65" width="11.7" height="11.7" fill="#fff" stroke="#333" stroke-width="1.3"/><path d="M2.3,6.4 L5,9.2 L10.7,3.4" fill="none" stroke="#333" stroke-width="1.2"/></svg>
<div style="position:absolute;left:34.21px;top:503px;font-size:9.80px;line-height:9.80px;color:#000;white-space:nowrap;transform:scaleX(0.8811);transform-origin:0 0;">PRACK</div>
<svg style="position:absolute;left:122px;top:500px" width="13" height="13" viewBox="0 0 13 13"><rect x="0.65" y="0.65" width="11.7" height="11.7" fill="#fff" stroke="#333" stroke-width="1.3"/></svg>
<div style="position:absolute;left:137.33px;top:503px;font-size:9.80px;line-height:9.80px;color:#000;white-space:nowrap;transform:scaleX(0.9326);transform-origin:0 0;">Session Timers</div>
<div style="position:absolute;left:0px;top:577px;width:675px;height:24px;background:#f0f0f0"></div>
<div style="position:absolute;left:0px;top:578px;width:675px;height:1px;background:#d4d4d4"></div>
<div style="position:absolute;left:0px;top:578px;width:149px;height:22px;background:#e1e1e1;border:1px solid #adadad;box-sizing:border-box"></div>
<svg style="position:absolute;left:0px;top:577px" width="22" height="24" viewBox="0 0 22 24"><text transform="translate(10,20) scale(1.1,1)" font-family="Liberation Sans" font-weight="bold" font-size="29.5" fill="#c0683c" text-anchor="middle">e</text></svg>
<div style="position:absolute;left:21.93px;top:586px;font-size:9.80px;line-height:9.80px;color:#000;white-space:nowrap;transform:scaleX(0.9708);transform-origin:0 0;">pbx.easybell.de</div>
<svg style="position:absolute;left:135px;top:586.5px" width="10" height="7" viewBox="0 0 10 7"><path d="M1,1 L5,5 L9,1" fill="none" stroke="#333" stroke-width="1"/></svg>
<svg style="position:absolute;left:152px;top:583px" width="14" height="14" viewBox="0 0 14 14"><defs><radialGradient id="gg" cx="0.4" cy="0.35" r="0.7"><stop offset="0" stop-color="#78e070"/><stop offset="1" stop-color="#3cc03c"/></radialGradient></defs><circle cx="6.85" cy="6.85" r="5.6" fill="url(#gg)" stroke="#2a9a2a" stroke-width="0.8"/></svg>
<div style="position:absolute;left:168px;top:579px;width:1px;height:22px;background:#dadada"></div>
<div style="position:absolute;left:172.81px;top:588px;font-size:9.80px;line-height:9.80px;color:#000;white-space:nowrap;transform:scaleX(0.9667);transform-origin:0 0;">sip:CPBX-</div>
<div style="position:absolute;left:216.0px;top:587px;width:4.85px;height:5.2px;background:#b8a8b0"></div>
<div style="position:absolute;left:216.0px;top:592.2px;width:4.85px;height:5px;background:#a8a8a8"></div>
<div style="position:absolute;left:220.85px;top:587px;width:4.85px;height:5.2px;background:#c8ccc8"></div>
<div style="position:absolute;left:220.85px;top:592.2px;width:4.85px;height:5px;background:#a0a8a0"></div>
<div style="position:absolute;left:225.7px;top:587px;width:4.85px;height:5.2px;background:#b0aaa8"></div>
<div style="position:absolute;left:225.7px;top:592.2px;width:4.85px;height:5px;background:#d8d8d8"></div>
<div style="position:absolute;left:230.55px;top:587px;width:4.85px;height:5.2px;background:#b0b8bc"></div>
<div style="position:absolute;left:230.55px;top:592.2px;width:4.85px;height:5px;background:#c0c0c0"></div>
<div style="position:absolute;left:235.4px;top:587px;width:4.85px;height:5.2px;background:#d0ccc4"></div>
<div style="position:absolute;left:235.4px;top:592.2px;width:4.85px;height:5px;background:#a8aca8"></div>
<div style="position:absolute;left:240.25px;top:587px;width:4.85px;height:5.2px;background:#b0b4c0"></div>
<div style="position:absolute;left:240.25px;top:592.2px;width:4.85px;height:5px;background:#b4b8c4"></div>
<div style="position:absolute;left:245.1px;top:587px;width:4.85px;height:5.2px;background:#b8b8b8"></div>
<div style="position:absolute;left:245.1px;top:592.2px;width:4.85px;height:5px;background:#e0e0e0"></div>
<div style="position:absolute;left:249.95px;top:587px;width:4.85px;height:5.2px;background:#b8b8b8"></div>
<div style="position:absolute;left:249.95px;top:592.2px;width:4.85px;height:5px;background:#d8d4cc"></div>
<div style="position:absolute;left:254.82px;top:588px;font-size:9.80px;line-height:9.80px;color:#000;white-space:nowrap;transform:scaleX(0.9650);transform-origin:0 0;">-000007@pbx.easybell.de registriert</div>
<div style="position:absolute;left:672px;top:592px;width:2px;height:2px;background:#a8a8a8"></div>
<div style="position:absolute;left:669px;top:595px;width:2px;height:2px;background:#a8a8a8"></div>
<div style="position:absolute;left:672px;top:595px;width:2px;height:2px;background:#a8a8a8"></div>
<div style="position:absolute;left:666px;top:598px;width:2px;height:2px;background:#a8a8a8"></div>
<div style="position:absolute;left:669px;top:598px;width:2px;height:2px;background:#a8a8a8"></div>
<div style="position:absolute;left:672px;top:598px;width:2px;height:2px;background:#a8a8a8"></div>
</body></html>
